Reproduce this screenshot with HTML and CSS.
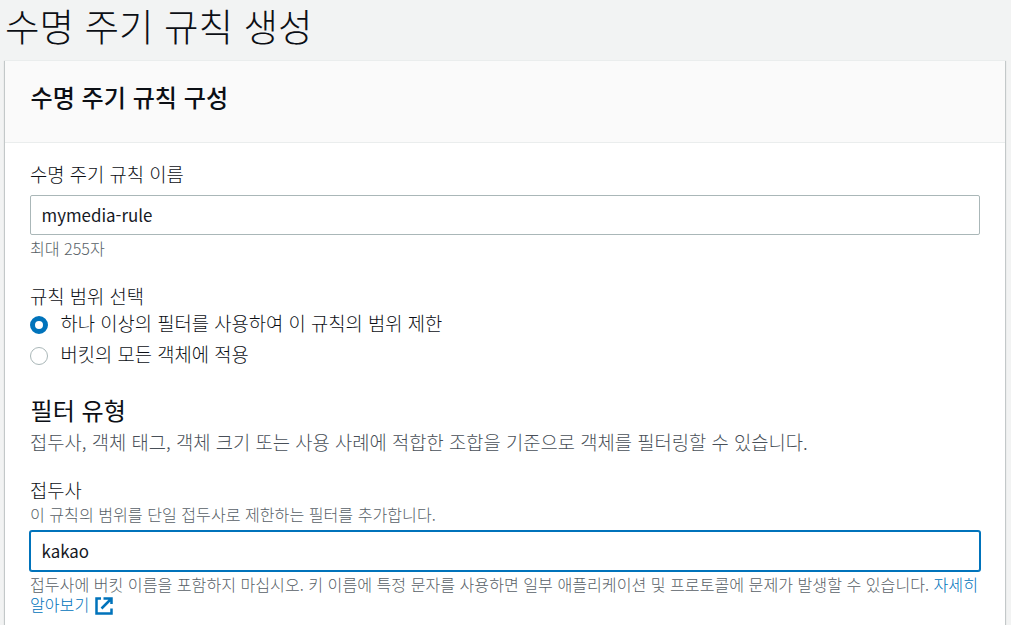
FILE: index.html
```html
<!DOCTYPE html>
<html lang="ko">
<head>
    <meta charset="UTF-8">
    <meta name="viewport" content="width=device-width, initial-scale=1.0">
    <title>수명 주기 규칙 생성</title>
    <link rel="stylesheet" href="styles.css">
</head>
<body>
    <h1>수명 주기 규칙 생성</h1>

    <form class="panel">
        <div class="panel-header">
            <h2>수명 주기 규칙 구성</h2>
        </div>

        <div class="panel-body">
            <div class="field">
                <label class="label" for="ruleName">수명 주기 규칙 이름</label>
                <input class="text-input" type="text" id="ruleName" value="mymedia-rule">
                <p class="hint">최대 255자</p>
            </div>

            <div class="scope">
                <div class="label">규칙 범위 선택</div>
                <label class="radio">
                    <input type="radio" name="scope" checked>
                    <span>하나 이상의 필터를 사용하여 이 규칙의 범위 제한</span>
                </label>
                <label class="radio">
                    <input type="radio" name="scope">
                    <span>버킷의 모든 객체에 적용</span>
                </label>
            </div>

            <div class="filter">
                <h3>필터 유형</h3>
                <p class="description">접두사, 객체 태그, 객체 크기 또는 사용 사례에 적합한 조합을 기준으로 객체를 필터링할 수 있습니다.</p>
            </div>

            <div class="field">
                <label class="label" for="prefix">접두사</label>
                <p class="hint top">이 규칙의 범위를 단일 접두사로 제한하는 필터를 추가합니다.</p>
                <input class="text-input focused" type="text" id="prefix" value="kakao">
                <p class="hint">접두사에 버킷 이름을 포함하지 마십시오. 키 이름에 특정 문자를 사용하면 일부 애플리케이션 및 프로토콜에 문제가 발생할 수 있습니다. <a href="#">자세히<br>알아보기 <svg class="external" viewBox="0 0 18 18"><path d="M6 1.5H1.5v15h15v-5M8.5 1.5h8V7M16 2L6.5 11.5"/></svg></a></p>
            </div>
        </div>
    </form>
</body>
</html>
```

FILE: styles.css
```css
* {
    box-sizing: border-box;
}

body {
    margin: 0;
    height: 625px;
    overflow: hidden;
    background-color: #f2f3f3;
    color: #0c0f15;
    font-family: 'Noto Sans CJK KR', sans-serif;
    font-size: 18.75px;
    font-weight: 300;
}

h1, h2, h3, p {
    margin: 0;
}

h1 {
    height: 60px;
    padding-left: 5px;
    font-size: 37.5px;
    font-weight: 300;
    line-height: 50px;
}

.panel {
    width: 1000px;
    margin-left: 5px;
    background-color: #fff;
    border-top: 1px solid #eaeded;
    box-shadow: 0 1px 1px rgba(0, 28, 36, 0.3), 1px 1px 1px rgba(0, 28, 36, 0.15), -1px 1px 1px rgba(0, 28, 36, 0.15);
}

.panel-header {
    height: 82px;
    padding: 18px 25.5px 0;
    background-color: #fafafa;
    border-bottom: 1px solid #eaeded;
}

h2 {
    font-size: 24.1px;
    font-weight: 500;
    line-height: 36px;
}

.panel-body {
    height: 500px;
    padding: 18px 25px 0;
}

.label {
    display: block;
    line-height: 26px;
}

.text-input {
    display: block;
    width: 950px;
    height: 40px;
    margin-top: 8px;
    padding: 0 11px 2px 10.5px;
    border: 1px solid #aab7b8;
    border-radius: 2px;
    background-color: #fff;
    color: #16191f;
    font-family: 'Noto Sans CJK KR', sans-serif;
    font-size: 16.9px;
    outline: none;
}

.focused {
    border-color: #0073bb;
    box-shadow: 0 0 0 1px #0073bb;
}

.hint {
    margin-top: 3px;
    color: #585f67;
    font-size: 16.1px;
    line-height: 20px;
}

.top {
    margin: 1px 0 -1px;
}

.scope {
    margin-top: 25px;
}

.radio {
    display: flex;
    align-items: center;
    gap: 12.5px;
    height: 31px;
}

.scope .label + .radio {
    margin-top: -2px;
}

.radio input {
    appearance: none;
    width: 18px;
    height: 18px;
    margin: 5px 0 0;
    border: 1px solid #aab7b8;
    border-radius: 50%;
}

.radio input:checked {
    border: 5px solid #0073bb;
}

.filter {
    margin-top: 24px;
}

h3 {
    padding-left: 0.5px;
    font-size: 24.1px;
    font-weight: 400;
    line-height: 34px;
}

.description {
    margin-top: 1px;
    color: #484f58;
    line-height: 28px;
}

.filter + .field {
    margin-top: 21px;
}

.hint a {
    color: #0073bb;
    text-decoration: none;
}

.external {
    width: 18px;
    height: 18px;
    margin-left: 1px;
    vertical-align: -4px;
    fill: none;
    stroke: #0073bb;
    stroke-width: 2.5;
}
```
